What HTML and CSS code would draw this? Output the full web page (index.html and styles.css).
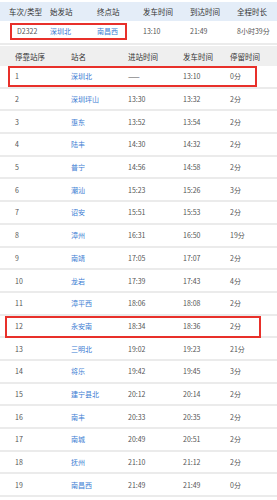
FILE: index.html
```html
<!DOCTYPE html>
<html lang="zh-CN">
<head>
<meta charset="utf-8">
<link rel="stylesheet" href="styles.css">
</head>
<body>
<div class="train">
  <div class="t1-row t1-head">
    <span>车次/类型</span><span>始发站</span><span>终点站</span><span>发车时间</span><span>到达时间</span><span>全程时长</span>
  </div>
  <div class="t1-row t1-body">
    <span class="code">D2322</span><a>深圳北</a><a>南昌西</a><span>13:10</span><span>21:49</span><span>8小时39分</span>
    <i class="mark mark-train"></i>
  </div>
</div>
<div class="stops">
  <div class="t2-row t2-head"><span>停靠站序</span><span>站名</span><span>进站时间</span><span>发车时间</span><span>停留时间</span></div>
  <div class="t2-row"><span>1</span><a>深圳北</a><span>——</span><span>13:10</span><span>0分</span><i class="mark mark-first"></i></div>
  <div class="t2-row"><span>2</span><a>深圳坪山</a><span>13:30</span><span>13:32</span><span>2分</span></div>
  <div class="t2-row"><span>3</span><a>惠东</a><span>13:52</span><span>13:54</span><span>2分</span></div>
  <div class="t2-row"><span>4</span><a>陆丰</a><span>14:30</span><span>14:32</span><span>2分</span></div>
  <div class="t2-row"><span>5</span><a>普宁</a><span>14:56</span><span>14:58</span><span>2分</span></div>
  <div class="t2-row"><span>6</span><a>潮汕</a><span>15:23</span><span>15:26</span><span>3分</span></div>
  <div class="t2-row"><span>7</span><a>诏安</a><span>15:51</span><span>15:53</span><span>2分</span></div>
  <div class="t2-row"><span>8</span><a>漳州</a><span>16:31</span><span>16:50</span><span>19分</span></div>
  <div class="t2-row"><span>9</span><a>南靖</a><span>17:05</span><span>17:07</span><span>2分</span></div>
  <div class="t2-row"><span>10</span><a>龙岩</a><span>17:39</span><span>17:43</span><span>4分</span></div>
  <div class="t2-row"><span>11</span><a>漳平西</a><span>18:06</span><span>18:08</span><span>2分</span></div>
  <div class="t2-row"><span>12</span><a>永安南</a><span>18:34</span><span>18:36</span><span>2分</span><i class="mark mark-twelve"></i></div>
  <div class="t2-row"><span>13</span><a>三明北</a><span>19:02</span><span>19:23</span><span>21分</span></div>
  <div class="t2-row"><span>14</span><a>将乐</a><span>19:42</span><span>19:45</span><span>3分</span></div>
  <div class="t2-row"><span>15</span><a>建宁县北</a><span>20:12</span><span>20:14</span><span>2分</span></div>
  <div class="t2-row"><span>16</span><a>南丰</a><span>20:33</span><span>20:35</span><span>2分</span></div>
  <div class="t2-row"><span>17</span><a>南城</a><span>20:49</span><span>20:51</span><span>2分</span></div>
  <div class="t2-row"><span>18</span><a>抚州</a><span>21:10</span><span>21:12</span><span>2分</span></div>
  <div class="t2-row"><span>19</span><a>南昌西</a><span>21:49</span><span>21:49</span><span>0分</span></div>
</div>
</body>
</html>
```
FILE: styles.css
```css
* { box-sizing: border-box; }
html, body { margin: 0; padding: 0; background: #fff; }
body {
  padding-top: 2px;
  font-family: "Noto Sans CJK SC", "Noto Sans", sans-serif;
  color: #555;
  font-size: 7px;
}
a { color: #3b7dd3; text-decoration: none; }

.t1-row {
  display: grid;
  grid-template-columns: 41px 47px 46px 47px 47px 1fr;
  align-items: center;
  padding-left: 9px;
  position: relative;
  white-space: nowrap;
}
.t1-head {
  height: 19px;
  background: #e4edf8;
  color: #333;
  font-size: 7.5px;
}
.t1-body {
  height: 24px;
  padding-bottom: 2px;
  border-bottom: 2px solid #ebebeb;
  margin-bottom: 1px;
}
.t1-body .code { padding-left: 8px; }

.t2-row {
  display: grid;
  grid-template-columns: 56px 57px 55px 47px 1fr;
  align-items: center;
  padding-left: 15px;
  height: 22.7px;
  border-bottom: 2px solid #ebebeb;
  position: relative;
  white-space: nowrap;
}
.t2-head {
  height: 20px;
  border-bottom: none;
  background: #efefef;
  color: #333;
  font-size: 7.5px;
}

.mark {
  position: absolute;
  border: 2px solid #e8302a;
}
.mark-train { left: 10px; top: 2px; width: 117px; height: 17px; }
.mark-first { left: 8px; top: 0; width: 249px; height: 21px; }
.mark-twelve { left: 5px; top: 0; width: 256px; height: 22px; }
```
